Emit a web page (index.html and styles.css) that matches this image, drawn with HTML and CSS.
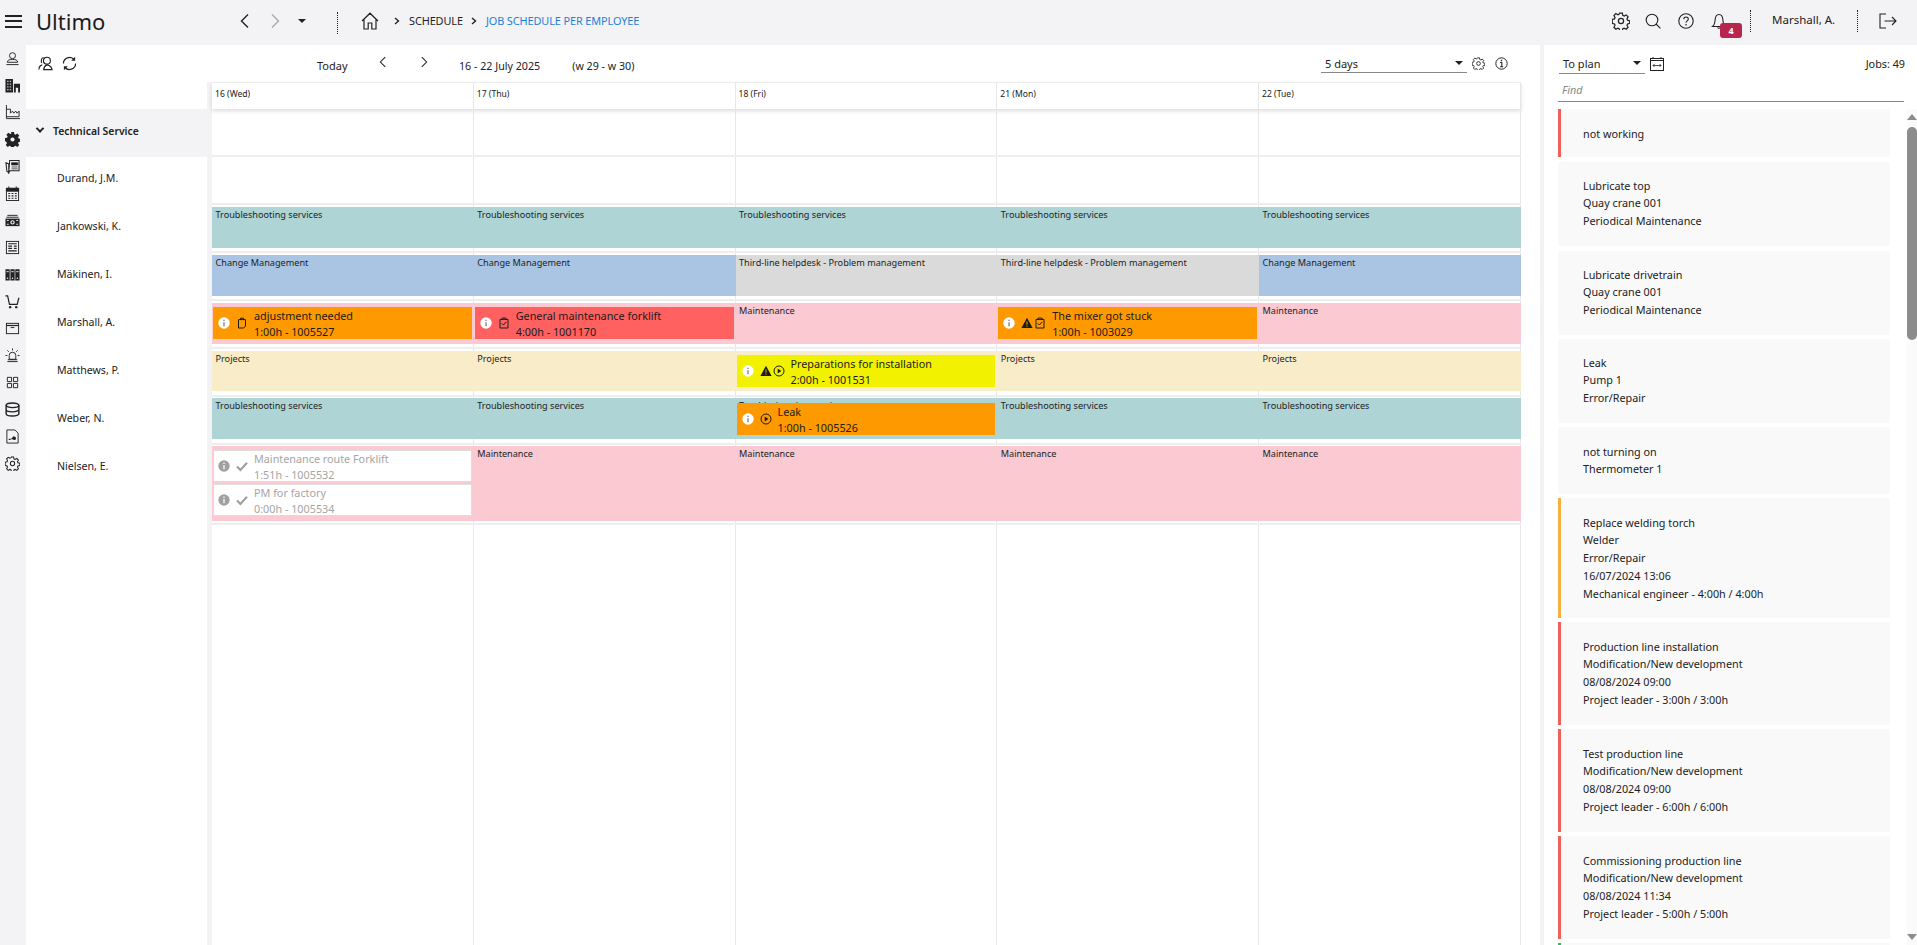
FILE: index.html
```html
<!DOCTYPE html>
<html lang="en">
<head>
    <meta charset="UTF-8">
    <meta name="viewport" content="width=device-width, initial-scale=1.0">
    <title>Ultimo - Job schedule per employee</title>
    <link rel="stylesheet" href="styles.css">
</head>
<body>

    <svg class="defs" width="0" height="0">
        <symbol id="i-left" viewBox="0 0 16 16"><path d="M11 1.5 4.5 8l6.500 6.500" fill="none" stroke="currentColor" stroke-width="1.4"/></symbol>
        <symbol id="i-right" viewBox="0 0 16 16"><path d="M5 1.5 11.500 8 5 14.500" fill="none" stroke="currentColor" stroke-width="1.4"/></symbol>
        <symbol id="i-small-right" viewBox="0 0 8 8"><path d="M2 1 5.500 4 2 7" fill="none" stroke="currentColor" stroke-width="1.400"/></symbol>
        <symbol id="i-gear" viewBox="0 0 16 16"><g fill="none" stroke="currentColor" stroke-width="1.1"><circle cx="8" cy="8" r="2.3"/><path d="M6.8 1h2.400l.4 2 1.200.6 1.800-1 1.700 1.700-1 1.800.5 1.200 2 .5v2.400l-2 .4-.5 1.200 1 1.800-1.700 1.700-1.800-1-1.200.5-.4 2H6.800l-.4-2-1.200-.5-1.800 1-1.700-1.700 1-1.800-.5-1.200-2-.4V6.600l2-.5.5-1.200-1-1.800 1.700-1.700 1.800 1 1.200-.6z"/></g></symbol>
        <symbol id="i-info" viewBox="0 0 16 16"><circle cx="8" cy="8" r="7" fill="none" stroke="currentColor" stroke-width="1.2"/><rect x="7.200" y="3.400" width="1.600" height="1.800" fill="currentColor"/><path d="M6.200 6.800h2.200v5M6.200 12h3.800" fill="none" stroke="currentColor" stroke-width="1.300"/></symbol>
        <symbol id="i-bubble" viewBox="0 0 12 12"><circle cx="6" cy="6" r="5.700" fill="#fff"/><path d="M6 2.800v1.200M6 5.200v4" stroke="#666" stroke-width="1.100"/></symbol>
        <symbol id="i-bubble-off" viewBox="0 0 12 12"><circle cx="6" cy="6" r="5.700" fill="#a0a0a0"/><path d="M6 2.600v1.300M6 5v4.200" stroke="#fff" stroke-width="1.200"/></symbol>
        <symbol id="i-warn" viewBox="0 0 12 12"><path d="M6 .8 11.600 11H.4z" fill="#1c1c1c"/><path d="M6 4.400v3.400M6 8.600v1.200" stroke="#f2c200" stroke-width=".9"/></symbol>
        <symbol id="i-play" viewBox="0 0 12 12"><circle cx="6" cy="6" r="5" fill="none" stroke="#1c1c1c" stroke-width="1"/><path d="M4.700 3.600 8.300 6l-3.600 2.400z" fill="#1c1c1c"/></symbol>
        <symbol id="i-clip" viewBox="0 0 12 12"><path d="M2 2.400h8V11H2z M4 2.400V1h4v1.400" fill="none" stroke="#1c1c1c" stroke-width="1"/><path d="M3.800 6.400 5.400 8 8.400 4.800" fill="none" stroke="#1c1c1c" stroke-width="1"/></symbol>
        <symbol id="i-note" viewBox="0 0 12 12"><path d="M2.500 2.600h7V9l-1.800 2h-5.200z M4.500 2.600V1.200h3v1.400" fill="none" stroke="#1c1c1c" stroke-width="1"/></symbol>
        <symbol id="i-check" viewBox="0 0 12 12"><path d="M1 6.400 4.400 10 11 2.800" fill="none" stroke="#a0a0a0" stroke-width="2.200"/></symbol>
    </svg>

    <header class="topbar">
        <div class="hamburger"><span></span><span></span><span></span></div>
        <div class="logo">Ultimo</div>
        <div class="hist">
            <svg class="hist-icon"><use href="#i-left"/></svg>
            <svg class="hist-icon muted"><use href="#i-right"/></svg>
            <span class="caret"></span>
        </div>
        <div class="dots first"></div>
        <svg class="home" viewBox="0 0 18 18"><path d="M1 9 9 1.200 17 9M3 7.400V17h4.200v-6h3.600v6H15V7.400" fill="none" stroke="#222" stroke-width="1.200"/></svg>
        <nav class="crumbs">
            <svg class="crumb-sep"><use href="#i-small-right"/></svg>
            <span>SCHEDULE</span>
            <svg class="crumb-sep"><use href="#i-small-right"/></svg>
            <span class="current">JOB SCHEDULE PER EMPLOYEE</span>
        </nav>
        <div class="top-right">
            <svg class="top-icon big"><use href="#i-gear"/></svg>
            <svg class="top-icon" viewBox="0 0 16 16"><circle cx="7" cy="7" r="5.800" fill="none" stroke="currentColor" stroke-width="1.100"/><path d="M11 11l4.400 4.400" stroke="currentColor" stroke-width="1.100"/></svg>
            <svg class="top-icon" viewBox="0 0 16 16"><circle cx="8" cy="8" r="7.200" fill="none" stroke="currentColor" stroke-width="1.100"/><path d="M5.800 6.200C5.800 3.400 10.300 3.400 10.300 6c0 1.800-2.300 2-2.300 3.800" fill="none" stroke="currentColor" stroke-width="1.100"/><path d="M8 11v1.400" stroke="currentColor" stroke-width="1.200"/></svg>
            <div class="bell">
                <svg class="top-icon" viewBox="0 0 16 16"><path d="M1.500 13.500c2-1.500 2.400-3.500 2.600-6.500C4.300 3.500 6 1.500 8 1.500s3.700 2 3.900 5.500c.2 3 .6 5 2.600 6.500z M6.500 14.500c.5 1 2.500 1 3 0" fill="none" stroke="currentColor" stroke-width="1.100"/></svg>
                <span class="badge">4</span>
            </div>
            <div class="dots"></div>
            <span class="user">Marshall, A.</span>
            <div class="dots"></div>
            <svg class="logout" viewBox="0 0 18 16"><path d="M7 1H1v14h6M5.500 8H17M13 4l4 4-4 4" fill="none" stroke="#222" stroke-width="1.100"/></svg>
        </div>
    </header>

    <div class="main">
        <aside class="rail">
            <svg viewBox="0 0 16 16"><circle cx="8" cy="5" r="3.200" fill="none" stroke="#222"/><path d="M2.500 12c0-2.500 2.500-3 5.500-3s5.500.5 5.500 3zM1.500 14.500h13" fill="none" stroke="#222"/></svg>
            <svg viewBox="0 0 16 16"><path d="M.5 1h8v14.500h-8zM9.500 6h6.500v9.500h-2v-5h-2.500v5h-2z" fill="#222"/><path d="M2.200 3.500h1.600M5 3.500h1.600M2.200 6.500h1.600M5 6.500h1.600M2.200 9.500h1.600M5 9.500h1.600M2.200 12.500h1.600M5 12.500h1.600" stroke="#f3f2f5"/></svg>
            <svg viewBox="0 0 16 16"><path d="M1.500 0v14.500H16M1.500 12.500H15V6.500l-2.200 2.200-1.300-2.200-2.200 2.200-1.300-2.200-2.200 2.200V4.500H1.500" fill="none" stroke="#222"/></svg>
            <svg viewBox="0 0 16 16"><path d="M6.500 0h3l.4 2.200 1.300.6 1.900-1.300 2.100 2.100-1.300 1.900.6 1.300 2.200.4v3l-2.200.4-.6 1.300 1.300 1.900-2.100 2.100-1.900-1.300-1.300.6-.4 2.200h-3l-.4-2.200-1.300-.6-1.900 1.300-2.100-2.100 1.300-1.900-.6-1.300L0 9.500v-3l2.200-.4.6-1.300-1.300-1.900 2.100-2.100 1.900 1.300 1.300-.6z" fill="#222"/><circle cx="8" cy="8" r="2.200" fill="#f3f2f5"/></svg>
            <svg viewBox="0 0 16 16"><path d="M5 1.500h10v11H5.500L4 14.500zM1 4l3 1.200V14.500l-2-1.500z" fill="none" stroke="#222" stroke-width="1.100"/><path d="M7 4h6.500v2.300H7zM7 8.500h6.500M7 10.500h6.500" fill="#222" stroke="#222" stroke-width=".8"/></svg>
            <svg viewBox="0 0 16 16"><rect x="1.500" y="2.500" width="13" height="13" fill="none" stroke="#222"/><path d="M1.500 2.500h13v3h-13zM4 .5v3M12 .5v3" fill="#222" stroke="#222"/><path d="M3.500 8h2M7 8h2M10.500 8h2M3.500 10.500h2M7 10.500h2M10.500 10.500h2M3.500 13h2M7 13h2M10.500 13h2" stroke="#222" stroke-width="1.200"/></svg>
            <svg viewBox="0 0 16 16"><path d="M2.500 2.500h11M1.500 4.500h13" stroke="#222"/><path d="M.5 6h15v8H.5z" fill="#222"/><circle cx="8" cy="10" r="2.300" fill="#f3f2f5"/><circle cx="8" cy="10" r="1.100" fill="#222"/><path d="M2 8h2M2 12h2M12 8h2M12 12h2" stroke="#f3f2f5"/></svg>
            <svg viewBox="0 0 16 16"><rect x="1.500" y="1.500" width="13" height="13" fill="none" stroke="#222"/><path d="M3.500 4h9M3.500 6.500h4M3.500 9h4M3.500 11.500h9M9.500 6.500h3M9.500 9h3" stroke="#222" stroke-width="1.300"/></svg>
            <svg viewBox="0 0 16 16"><path d="M.5 2.500h4.500v12H.5zM5.800 2.500h4.500v12H5.800zM11 2.500h4.500v12H11z" fill="#222"/><path d="M1.500 5h2.500M6.800 5h2.500M12 5h2.500" stroke="#f3f2f5"/><circle cx="2.700" cy="12" r=".8" fill="#f3f2f5"/><circle cx="8" cy="12" r=".8" fill="#f3f2f5"/><circle cx="13.200" cy="12" r=".8" fill="#f3f2f5"/></svg>
            <svg viewBox="0 0 16 16"><path d="M.5 2h2.300l2 9h8.200l1.800-7" fill="none" stroke="#222" stroke-width="1.300"/><circle cx="5.500" cy="14" r="1.300" fill="#222"/><circle cx="12" cy="14" r="1.300" fill="#222"/></svg>
            <svg viewBox="0 0 16 16"><rect x="1.500" y="2.500" width="13" height="11" fill="none" stroke="#222"/><path d="M1.500 4.800h13" stroke="#222" stroke-width="1.300"/><path d="M6 7h4" stroke="#222"/></svg>
            <svg viewBox="0 0 16 16"><path d="M4.500 12V8a3.500 3.500 0 0 1 7 0v4zM2.500 14.500h11M3 12.500h10M8 .5v2M2.500 2.500 4 4M13.500 2.500 12 4M.5 8h2M13.500 8h2" fill="none" stroke="#222" stroke-width="1"/></svg>
            <svg viewBox="0 0 16 16"><path d="M2.500 2.500h4.500V7H2.500zM9 2.500h4.500V7H9zM2.500 9H7v4.500H2.500zM9 9h4.500v4.500H9z" fill="none" stroke="#222"/></svg>
            <svg viewBox="0 0 16 16"><ellipse cx="8" cy="3.500" rx="6.800" ry="2.500" fill="none" stroke="#222" stroke-width="1.500"/><path d="M1.200 3.500v9c0 1.400 3 2.500 6.800 2.500s6.800-1.100 6.800-2.500v-9M1.200 8c0 1.400 3 2.500 6.800 2.500s6.800-1.100 6.800-2.500" fill="none" stroke="#222" stroke-width="1.500"/></svg>
            <svg viewBox="0 0 16 16"><path d="M2 1h8.500L14 4.500V15H2z" fill="none" stroke="#222"/><path d="M4 11h2M7 11l2.500-2.500 1.500 1.500" fill="none" stroke="#222" stroke-width="1.400"/><circle cx="10" cy="10" r="1.700" fill="#222"/></svg>
            <svg viewBox="0 0 16 16"><use href="#i-gear" width="16" height="16" color="#222"/></svg>
        </aside>

        <section class="schedule">
            <div class="toolbar">
                <div class="tool-left">
                    <svg class="tool-icon" viewBox="0 0 16 16"><circle cx="9.500" cy="5" r="3.700" fill="none" stroke="#222" stroke-width="1.200"/><path d="M6 1.600C3.500 2 3 5 4 7.500M1 14.500c0-3 1.500-4.500 3.500-5M6 14.500c.5-3 2-4.500 3.500-5 3 .5 5 2 5.500 5z" fill="none" stroke="#222" stroke-width="1.200"/></svg>
                    <svg class="tool-icon" viewBox="0 0 16 16"><path d="M1.500 8A6.500 6.500 0 0 1 13 4M14.500 8A6.500 6.500 0 0 1 3 12" fill="none" stroke="#222" stroke-width="1.300"/><path d="M14 .8V5H9.800zM2 15.200V11h4.200z" fill="#222"/></svg>
                </div>
                <span class="today">Today</span>
                <svg class="tool-chev"><use href="#i-left"/></svg>
                <svg class="tool-chev next"><use href="#i-right"/></svg>
                <span class="range">16 - 22 July 2025</span>
                <span class="weeks">(w 29 - w 30)</span>
                <div class="select days-select"><span>5 days</span><span class="caret"></span></div>
                <svg class="mini-icon"><use href="#i-gear"/></svg>
                <svg class="mini-icon"><use href="#i-info"/></svg>
            </div>

            <div class="planner">
                <div class="employees">
                    <div class="emp-group"><span class="group-chev"></span>Technical Service</div>
                    <div class="emp">Durand, J.M.</div>
                    <div class="emp">Jankowski, K.</div>
                    <div class="emp">Mäkinen, I.</div>
                    <div class="emp">Marshall, A.</div>
                    <div class="emp">Matthews, P.</div>
                    <div class="emp">Weber, N.</div>
                    <div class="emp">Nielsen, E.</div>
                </div>

                <div class="calendar">
                    <div class="day-head">
                        <div class="cell">16 (Wed)</div>
                        <div class="cell">17 (Thu)</div>
                        <div class="cell">18 (Fri)</div>
                        <div class="cell">21 (Mon)</div>
                        <div class="cell">22 (Tue)</div>
                    </div>

                    <div class="row"><div class="cell"></div><div class="cell"></div><div class="cell"></div><div class="cell"></div><div class="cell"></div></div>
                    <div class="row"><div class="cell"></div><div class="cell"></div><div class="cell"></div><div class="cell"></div><div class="cell"></div></div>

                    <div class="row">
                        <div class="cell"><div class="band teal">Troubleshooting services</div></div>
                        <div class="cell"><div class="band teal">Troubleshooting services</div></div>
                        <div class="cell"><div class="band teal">Troubleshooting services</div></div>
                        <div class="cell"><div class="band teal">Troubleshooting services</div></div>
                        <div class="cell"><div class="band teal">Troubleshooting services</div></div>
                    </div>

                    <div class="row">
                        <div class="cell"><div class="band blue">Change Management</div></div>
                        <div class="cell"><div class="band blue">Change Management</div></div>
                        <div class="cell"><div class="band grey">Third-line helpdesk - Problem management</div></div>
                        <div class="cell"><div class="band grey">Third-line helpdesk - Problem management</div></div>
                        <div class="cell"><div class="band blue">Change Management</div></div>
                    </div>

                    <div class="row">
                        <div class="cell"><div class="band pink">
                            <div class="job orange">
                                <svg class="job-info"><use href="#i-bubble"/></svg>
                                <svg class="job-icon"><use href="#i-note"/></svg>
                                <div class="job-text"><div>adjustment needed</div><div>1:00h - 1005527</div></div>
                            </div>
                        </div></div>
                        <div class="cell"><div class="band pink">
                            <div class="job red">
                                <svg class="job-info"><use href="#i-bubble"/></svg>
                                <svg class="job-icon"><use href="#i-clip"/></svg>
                                <div class="job-text"><div>General maintenance forklift</div><div>4:00h - 1001170</div></div>
                            </div>
                        </div></div>
                        <div class="cell"><div class="band pink">Maintenance</div></div>
                        <div class="cell"><div class="band pink">
                            <div class="job orange">
                                <svg class="job-info"><use href="#i-bubble"/></svg>
                                <svg class="job-icon warn"><use href="#i-warn"/></svg>
                                <svg class="job-icon"><use href="#i-clip"/></svg>
                                <div class="job-text"><div>The mixer got stuck</div><div>1:00h - 1003029</div></div>
                            </div>
                        </div></div>
                        <div class="cell"><div class="band pink">Maintenance</div></div>
                    </div>

                    <div class="row short">
                        <div class="cell"><div class="band cream">Projects</div></div>
                        <div class="cell"><div class="band cream">Projects</div></div>
                        <div class="cell"><div class="band cream">
                            <div class="job yellow">
                                <svg class="job-info"><use href="#i-bubble"/></svg>
                                <svg class="job-icon warn"><use href="#i-warn"/></svg>
                                <svg class="job-icon"><use href="#i-play"/></svg>
                                <div class="job-text"><div>Preparations for installation</div><div>2:00h - 1001531</div></div>
                            </div>
                        </div></div>
                        <div class="cell"><div class="band cream">Projects</div></div>
                        <div class="cell"><div class="band cream">Projects</div></div>
                    </div>

                    <div class="row high">
                        <div class="cell"><div class="band teal">Troubleshooting services</div></div>
                        <div class="cell"><div class="band teal">Troubleshooting services</div></div>
                        <div class="cell"><div class="band teal">Troubleshooting services
                            <div class="job orange">
                                <svg class="job-info"><use href="#i-bubble"/></svg>
                                <svg class="job-icon"><use href="#i-play"/></svg>
                                <div class="job-text"><div>Leak</div><div>1:00h - 1005526</div></div>
                            </div>
                        </div></div>
                        <div class="cell"><div class="band teal">Troubleshooting services</div></div>
                        <div class="cell"><div class="band teal">Troubleshooting services</div></div>
                    </div>

                    <div class="row tall">
                        <div class="cell"><div class="band pink">
                            <div class="job done">
                                <svg class="job-info"><use href="#i-bubble-off"/></svg>
                                <svg class="job-icon"><use href="#i-check"/></svg>
                                <div class="job-text"><div>Maintenance route Forklift</div><div>1:51h - 1005532</div></div>
                            </div>
                            <div class="job done second">
                                <svg class="job-info"><use href="#i-bubble-off"/></svg>
                                <svg class="job-icon"><use href="#i-check"/></svg>
                                <div class="job-text"><div>PM for factory</div><div>0:00h - 1005534</div></div>
                            </div>
                        </div></div>
                        <div class="cell"><div class="band pink">Maintenance</div></div>
                        <div class="cell"><div class="band pink">Maintenance</div></div>
                        <div class="cell"><div class="band pink">Maintenance</div></div>
                        <div class="cell"><div class="band pink">Maintenance</div></div>
                    </div>

                    <div class="row rest"><div class="cell"></div><div class="cell"></div><div class="cell"></div><div class="cell"></div><div class="cell"></div></div>
                </div>
            </div>
        </section>

        <aside class="panel">
            <div class="panel-head">
                <div class="select plan-select"><span>To plan</span><span class="caret"></span></div>
                <svg class="plan-cal" viewBox="0 0 14 14"><rect x=".5" y="1.500" width="13" height="12" fill="none" stroke="#222"/><path d="M.5 3.500h13M3 0v2M11 0v2" fill="none" stroke="#222"/><path d="M3 8.500h8M4.500 7 3 8.500 4.500 10M9.500 7 11 8.500 9.500 10" fill="none" stroke="#222" stroke-width=".8"/></svg>
                <span class="jobs-count">Jobs: 49</span>
            </div>
            <div class="find">Find</div>
            <div class="panel-body">
                <div class="cards">
                    <div class="card alert slim"><div>not working</div></div>
                    <div class="card three wide-gap"><div>Lubricate top</div><div>Quay crane 001</div><div>Periodical Maintenance</div></div>
                    <div class="card three"><div>Lubricate drivetrain</div><div>Quay crane 001</div><div>Periodical Maintenance</div></div>
                    <div class="card three"><div>Leak</div><div>Pump 1</div><div>Error/Repair</div></div>
                    <div class="card"><div>not turning on</div><div>Thermometer 1</div></div>
                    <div class="card warning"><div>Replace welding torch</div><div>Welder</div><div>Error/Repair</div><div>16/07/2024 13:06</div><div>Mechanical engineer - 4:00h / 4:00h</div></div>
                    <div class="card alert"><div>Production line installation</div><div>Modification/New development</div><div>08/08/2024 09:00</div><div>Project leader - 3:00h / 3:00h</div></div>
                    <div class="card alert"><div>Test production line</div><div>Modification/New development</div><div>08/08/2024 09:00</div><div>Project leader - 6:00h / 6:00h</div></div>
                    <div class="card alert"><div>Commissioning production line</div><div>Modification/New development</div><div>08/08/2024 11:34</div><div>Project leader - 5:00h / 5:00h</div></div>
                    <div class="card ok"></div>
                </div>
                <div class="scrollbar">
                    <span class="arrow up"></span>
                    <span class="thumb"></span>
                    <span class="arrow down"></span>
                </div>
            </div>
        </aside>
    </div>

</body>
</html>
```

FILE: styles.css
```css
* {
    box-sizing: border-box;
}
html, body {
    height: 100%;
}
body {
    margin: 0;
    overflow: hidden;
    display: flex;
    flex-direction: column;
    font-family: "Noto Sans", "Open Sans", sans-serif;
    font-size: 11px;
    color: #222;
    background: #f3f2f5;
}
svg {
    display: block;
    flex: none;
}
.defs {
    position: absolute;
}
.caret {
    width: 0;
    height: 0;
    border-left: 4px solid transparent;
    border-right: 4px solid transparent;
    border-top: 4px solid #222;
}

/* top bar */
.topbar {
    display: flex;
    align-items: center;
    flex: none;
    height: 45px;
    background: #f3f2f5;
}
.hamburger {
    display: flex;
    flex-direction: column;
    justify-content: space-between;
    width: 17px;
    height: 13px;
    margin: 0 0 3px 5px;
}
.hamburger span {
    height: 2px;
    background: #222;
}
.logo {
    width: 201px;
    margin: 0 0 0 14px;
    padding-bottom: 3px;
    font-size: 22px;
    line-height: 30px;
    color: #1c1c1c;
}
.hist {
    display: flex;
    align-items: center;
    width: 100px;
    padding-bottom: 3px;
}
.hist-icon {
    width: 16px;
    height: 16px;
    margin-right: 14px;
    color: #222;
}
.hist-icon.muted {
    color: #aaa;
    margin-right: 15px;
}
.dots {
    width: 1px;
    height: 22px;
    border-left: 1px dotted #222;
}
.dots.first {
    margin: 0 23px 0 0;
}
.home {
    width: 18px;
    height: 18px;
    margin-bottom: 3px;
}
.crumbs {
    display: flex;
    align-items: center;
    margin-left: 14px;
    padding-bottom: 4px;
    font-size: 10.9px;
    letter-spacing: -.1px;
}
.crumb-sep {
    width: 8px;
    height: 8px;
    margin-right: 8px;
}
.crumbs span {
    margin-right: 7px;
}
.crumbs .current {
    color: #1f7fd6;
}
.top-right {
    display: flex;
    align-items: center;
    margin-left: auto;
    padding-bottom: 3px;
}
.top-icon {
    width: 16px;
    height: 16px;
    margin-right: 17px;
    color: #222;
}
.top-icon.big {
    width: 18px;
    height: 18px;
    margin: 0 15px 0 -2px;
}
.bell {
    position: relative;
    margin-right: 23px;
}
.bell .top-icon {
    margin: 0;
}
.badge {
    position: absolute;
    left: 9px;
    top: 10px;
    width: 22px;
    height: 15px;
    border-radius: 3px;
    background: #b8254f;
    color: #fff;
    font-size: 9px;
    font-weight: 700;
    line-height: 15px;
    text-align: center;
}
.user {
    width: 85px;
    margin-left: 21px;
    padding-bottom: 3px;
    font-size: 11.5px;
}
.logout {
    width: 18px;
    height: 16px;
    margin: 0 20px 0 21px;
}

/* layout */
.main {
    display: flex;
    flex: 1;
    min-height: 0;
}
.rail {
    flex: none;
    width: 26px;
    padding: 6px 0 0 5px;
}
.rail svg {
    width: 15px;
    height: 15px;
    margin-bottom: 12px;
}
.schedule {
    display: flex;
    flex-direction: column;
    flex: none;
    width: 1514px;
    background: #fff;
}

/* schedule toolbar */
.toolbar {
    display: flex;
    align-items: center;
    flex: none;
    height: 37px;
    padding-bottom: 1px;
}
.tool-left {
    display: flex;
    gap: 9px;
    width: 291px;
    padding: 0 0 0 12px;
}
.tool-icon {
    width: 15px;
    height: 15px;
}
.today {
    width: 60px;
    padding-top: 5px;
}
.tool-chev {
    width: 12px;
    height: 14px;
    margin-bottom: 3px;
    overflow: visible;
}
.tool-chev.next {
    margin-left: 29px;
}
.range {
    margin-left: 29px;
    padding-top: 5px;
    font-size: 10.7px;
}
.weeks {
    margin-left: 32px;
    padding-top: 5px;
    font-size: 10.7px;
}
.select {
    display: flex;
    align-items: center;
    justify-content: space-between;
    height: 20px;
    padding: 0 4px;
    border-bottom: 1px solid #888;
}
.days-select {
    width: 146px;
    margin: 0 5px 0 auto;
    padding-top: 1px;
}
.mini-icon {
    width: 13px;
    height: 13px;
    margin-right: 10px;
    color: #222;
}
.toolbar .mini-icon:last-child {
    margin-right: 32px;
}

/* planner */
.planner {
    display: flex;
    flex: 1;
    min-height: 0;
}
.employees {
    flex: none;
    width: 186px;
    padding: 27px 5px 0 0;
    background: linear-gradient(#fff, #fff) 0 0 / 181px 100% no-repeat, #f3f2f5;
}
.emp-group {
    display: flex;
    align-items: center;
    height: 48px;
    padding: 0 0 5px 11px;
    background: #f3f2f5;
    font-size: 10.4px;
    font-weight: 600;
}
.group-chev {
    width: 6px;
    height: 6px;
    margin: -2px 10px 0 0;
    border-right: 2px solid #222;
    border-bottom: 2px solid #222;
    transform: rotate(45deg) translate(-1px, -1px);
}
.emp {
    display: flex;
    align-items: center;
    height: 48px;
    padding: 0 0 6px 31px;
    font-size: 10.6px;
}
.calendar {
    display: flex;
    flex-direction: column;
    flex: none;
    width: 1309px;
}
.day-head, .row {
    display: grid;
    grid-template-columns: repeat(5, 261.75px);
    flex: none;
}
.day-head {
    position: relative;
    height: 27px;
    border-top: 1px solid #eee;
    box-shadow: 0 2px 4px rgba(0, 0, 0, .14);
    font-size: 8.6px;
    line-height: 23px;
}
.cell {
    position: relative;
    border-right: 1px solid #e6e6e6;
}
.day-head .cell {
    padding-left: 3px;
}
.row {
    height: 48px;
    border-bottom: 2px solid #eee;
}
.row .cell {
    padding-top: 2px;
}
.row.short .band {
    height: 40px;
}
.row.high .cell {
    padding-top: 1px;
}
.row.tall {
    height: 80px;
}
.row.tall .cell {
    padding-top: 1px;
}
.row.rest {
    flex: 1;
    border-bottom: 0;
}

/* bands */
.band {
    position: relative;
    height: 41px;
    margin-right: -1px;
    padding: 1px 0 0 3.5px;
    overflow: hidden;
    color: #222;
    font-size: 9.15px;
    line-height: 13px;
}
.row.tall .band {
    height: 75px;
}
.teal {
    background: #aed4d6;
}
.blue {
    background: #a9c5e3;
}
.grey {
    background: #d9dad9;
}
.pink {
    background: #fac9d1;
}
.cream {
    background: #f8edc8;
}

/* jobs on top of a band */
.job {
    position: absolute;
    left: 1px;
    right: 2px;
    top: 4px;
    display: flex;
    align-items: center;
    height: 32px;
    padding: 1px 0 0 5px;
    font-size: 10.8px;
    line-height: 16px;
    color: #1c1c1c;
}
.row.high .job {
    top: 5px;
}
.job-info {
    width: 12px;
    height: 12px;
    margin: -1px 6px 0 0;
}
.job-icon {
    width: 12px;
    height: 12px;
    margin: -1px 6px 0 0;
}
.job-icon.warn {
    margin-right: 1px;
}
.orange {
    background: #ff9900;
}
.red {
    background: #ff6060;
}
.yellow {
    background: #f2f200;
}
.done {
    background: #fff;
    border: 1px solid #ddd;
    color: #a5a5a5;
    padding-left: 4px;
}
.done.second {
    top: 38px;
}

/* right panel */
.panel {
    display: flex;
    flex-direction: column;
    flex: none;
    width: 373px;
    margin-left: 4px;
    background: #fff;
}
.panel-head {
    display: flex;
    align-items: center;
    flex: none;
    height: 37px;
    padding: 8px 12px 0 15px;
}
.plan-select {
    width: 86px;
    margin-top: -8px;
}
.plan-cal {
    width: 14px;
    height: 14px;
    margin: -8px 0 0 5px;
}
.jobs-count {
    margin: -8px 0 0 auto;
    font-size: 10.8px;
}
.find {
    flex: none;
    height: 20px;
    margin: 0 13px 7px 14px;
    padding-left: 4px;
    border-bottom: 1px solid #888;
    color: #888;
    font-size: 10.8px;
    font-style: italic;
    line-height: 16px;
}
.panel-body {
    display: flex;
    flex: 1;
    min-height: 0;
    overflow: hidden;
}
.cards {
    flex: none;
    width: 332px;
    margin: 0 17px 0 14px;
}
.card {
    margin-bottom: 4px;
    padding: 16px 10px 16px 25px;
    background: #f9f9f9;
    font-size: 10.8px;
    line-height: 18px;
}
.card div:first-child {
    line-height: 17px;
}
.card.three div:first-child {
    line-height: 16px;
}
.card.wide-gap {
    margin-bottom: 5px;
}
.card.slim {
    height: 48px;
    margin-bottom: 5px;
}
.card.alert, .card.warning, .card.ok {
    padding-left: 22px;
    border-left: 3px solid #f0605a;
}
.card.warning {
    padding-bottom: 15px;
    border-left-color: #f5b041;
}
.card.ok {
    height: 60px;
    border-left-color: #35b56a;
}
.scrollbar {
    position: relative;
    flex: none;
    width: 10px;
    background: #fafafa;
}
.arrow {
    position: absolute;
    left: 0;
    width: 0;
    height: 0;
    border-left: 5px solid transparent;
    border-right: 5px solid transparent;
}
.arrow.up {
    top: 5px;
    border-bottom: 6px solid #8c8c8c;
}
.arrow.down {
    bottom: 5px;
    border-top: 6px solid #8c8c8c;
}
.thumb {
    position: absolute;
    left: 0;
    top: 18px;
    width: 10px;
    height: 213px;
    border-radius: 5px;
    background: #8c8c8c;
}
```
